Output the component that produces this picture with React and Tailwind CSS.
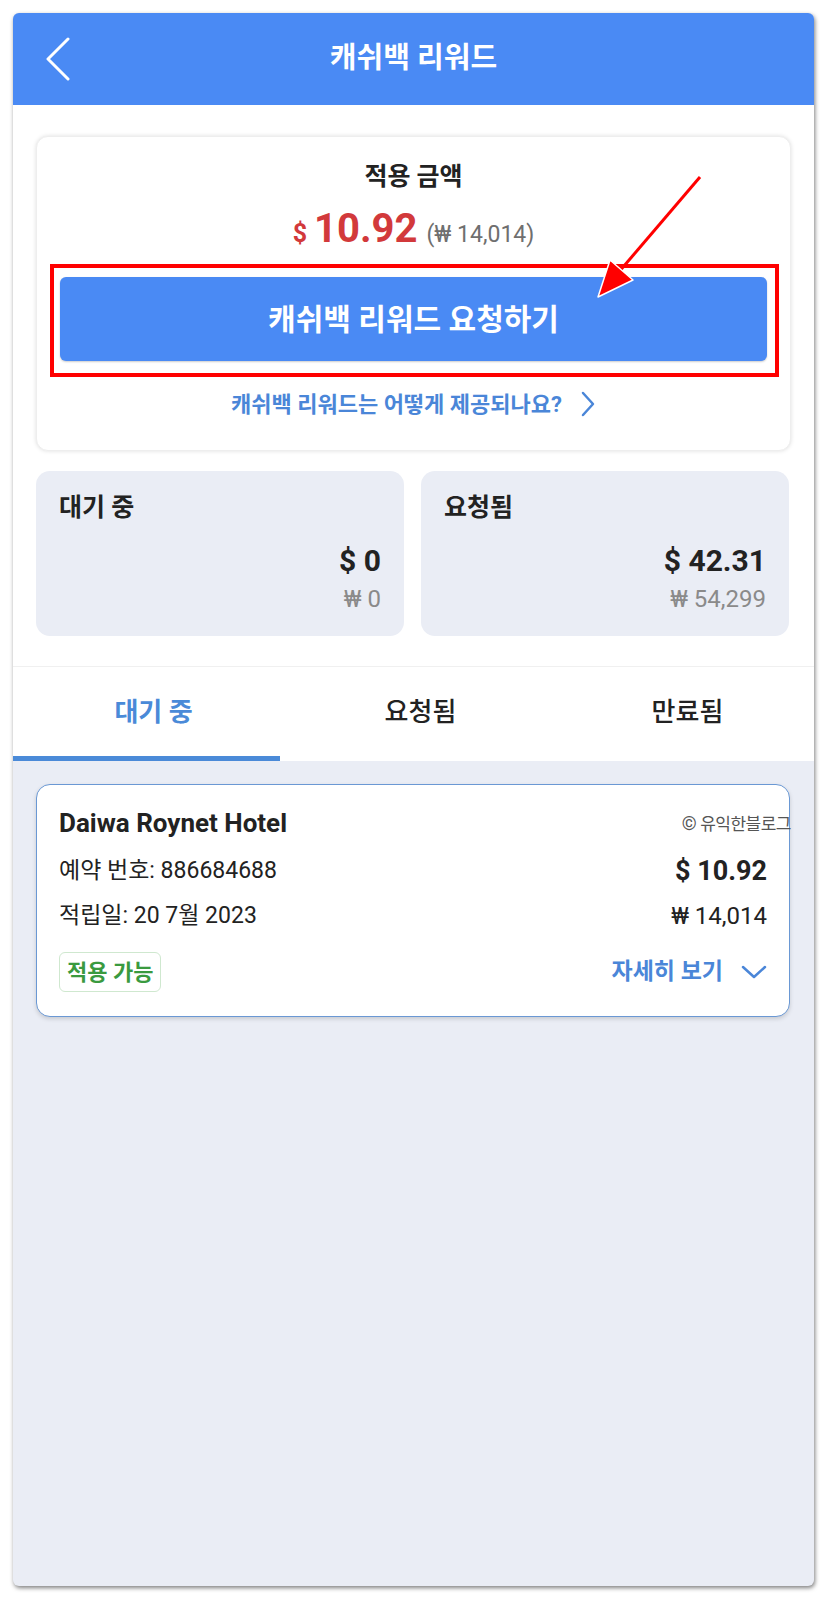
import React from 'react';

const FONT = { fontFamily: "Roboto, 'Noto Sans CJK KR', 'Noto Sans', sans-serif" };

const BackIcon = () => (
    <svg width="30" height="44" viewBox="0 0 30 44" fill="none">
        <path d="M23 2 L3 22 L23 42" stroke="white" strokeWidth="3" strokeLinecap="round" strokeLinejoin="round" />
    </svg>
);

const ChevronRight = () => (
    <svg width="16" height="26" viewBox="0 0 16 26" fill="none">
        <path d="M3 2 L13 13 L3 24" stroke="#4a86d8" strokeWidth="2.5" strokeLinecap="round" strokeLinejoin="round" />
    </svg>
);

const ChevronDown = () => (
    <svg width="26" height="16" viewBox="0 0 26 16" fill="none">
        <path d="M2 3 L13 13 L24 3" stroke="#4a86d8" strokeWidth="2.5" strokeLinecap="round" strokeLinejoin="round" />
    </svg>
);

const StatCard = ({ title, usd, krw }) => (
    <div className="flex-1 bg-[#eaedf5] rounded-[14px] pl-[23px] pr-[23px] pt-[21px] pb-[22px] flex flex-col">
        <div className="text-[25px] leading-[32px] font-semibold text-[#222]">{title}</div>
        <div className="mt-[19px] text-right text-[30px] leading-[36px] font-bold text-[#222]">{usd}</div>
        <div className="mt-[5px] text-right text-[24px] leading-[30px] text-[#8a8a8a]">{krw}</div>
    </div>
);

const tabs = ['대기 중', '요청됨', '만료됨'];

export default function App() {
    return (
        <div className="relative w-[828px] h-[1600px] bg-white pt-[13px] pl-[13px]" style={FONT}>
            <div className="w-[801px] h-[1573px] bg-[#eaedf5] rounded-[6px] overflow-hidden shadow-[1px_2px_4px_rgba(0,0,0,0.5)] flex flex-col">
                {/* header */}
                <div className="h-[92px] bg-[#4a8af4] relative flex items-center justify-center shrink-0">
                    <div className="absolute left-[32px] top-[24px]"><BackIcon /></div>
                    <div className="text-white text-[29px] font-bold">캐쉬백 리워드</div>
                </div>

                {/* top white area */}
                <div className="bg-white px-[23px] pt-[31px] pb-[30px] flex flex-col gap-[20px]">
                    <div className="rounded-[12px] bg-white shadow-[0_0_4px_rgba(0,0,0,0.13)] border border-[#eeeeee] pt-[24px] pb-[31px] flex flex-col items-center">
                        <div className="text-[25px] leading-[32px] font-semibold text-[#222]">적용 금액</div>
                        <div className="mt-[13px] h-[46px] flex items-baseline gap-[7px]">
                            <span className="text-[25px] font-bold text-[#d2393b]">$</span>
                            <span className="text-[40px] font-bold text-[#d2393b] leading-[46px]">10.92</span>
                            <span className="text-[23px] text-[#6f6f6f] ml-[2px]">(₩ 14,014)</span>
                        </div>
                        <div className="relative self-stretch mx-[23px] mt-[25px]">
                            <div className="h-[84px] rounded-[6px] bg-[#4a8af4] shadow-[0_1px_2px_rgba(0,0,0,0.2)] flex items-center justify-center text-white text-[30px] font-bold">
                                캐쉬백 리워드 요청하기
                            </div>
                            <div className="absolute -left-[10px] -right-[12px] -top-[13px] -bottom-[16px] border-[4px] border-[#ff0000]" />
                        </div>
                        <div className="mt-[28px] h-[30px] flex items-center gap-[18px] text-[22px] font-bold text-[#4a86d8]">
                            <span>캐쉬백 리워드는 어떻게 제공되나요?</span>
                            <ChevronRight />
                        </div>
                    </div>

                    <div className="flex gap-[17px] pr-[2px]">
                        <StatCard title="대기 중" usd="$ 0" krw="₩ 0" />
                        <StatCard title="요청됨" usd="$ 42.31" krw="₩ 54,299" />
                    </div>
                </div>

                {/* tabs */}
                <div className="bg-white border-t border-[#f0f0f0] h-[95px] flex">
                    {tabs.map((t, i) => (
                        <div key={t} className="flex-1 relative flex items-center justify-center pl-[14px] pb-[4px]">
                            <span className={i === 0 ? 'text-[26px] font-bold text-[#4a8ad8]' : 'text-[26px] font-medium text-[#222]'}>{t}</span>
                            {i === 0 && <div className="absolute left-0 right-0 bottom-0 h-[5px] bg-[#4a8ad8]" />}
                        </div>
                    ))}
                </div>

                {/* list */}
                <div className="px-[23px] pt-[23px] pr-[24px]">
                    <div className="relative bg-white rounded-[14px] border border-[#6a98d4] shadow-[0_2px_4px_rgba(0,0,0,0.15)] px-[22px] pt-[22px] pb-[24px]">
                        <div className="text-[26px] leading-[32px] font-bold text-[#222]">Daiwa Roynet Hotel</div>
                        <div className="mt-[14px] flex items-center justify-between h-[36px]">
                            <span className="text-[23px] text-[#222]">예약 번호: 886684688</span>
                            <span className="text-[27px] font-bold text-[#222]">$ 10.92</span>
                        </div>
                        <div className="mt-[9px] flex items-center justify-between h-[36px]">
                            <span className="text-[23px] text-[#222]">적립일: 20 7월 2023</span>
                            <span className="text-[24px] text-[#222]">₩ 14,014</span>
                        </div>
                        <div className="mt-[18px] flex items-center justify-between">
                            <span className="h-[40px] px-[7px] flex items-center rounded-[6px] border border-[#cfe8cf] text-[22px] font-bold text-[#3a9a3f]">적용 가능</span>
                            <span className="flex items-center gap-[18px] text-[23px] font-bold text-[#4a86d8]">
                                자세히 보기
                                <ChevronDown />
                            </span>
                        </div>
                        <div className="absolute -right-[2px] top-[25px] flex items-center gap-[4px] text-[17px] text-[#555] tracking-[-0.5px]">
                            <span className="text-[19px]">©</span>
                            <span>유익한블로그</span>
                        </div>
                    </div>
                </div>
            </div>

            {/* annotation arrow */}
            <svg className="absolute left-0 top-0 pointer-events-none" width="828" height="400" viewBox="0 0 828 400">
                <line x1="700" y1="177" x2="618" y2="273" stroke="#ff0000" strokeWidth="3" />
                <polygon points="598,297 610,260 633,280" fill="#ff0000" stroke="white" strokeWidth="1.5" strokeLinejoin="round" />
            </svg>
        </div>
    );
}
